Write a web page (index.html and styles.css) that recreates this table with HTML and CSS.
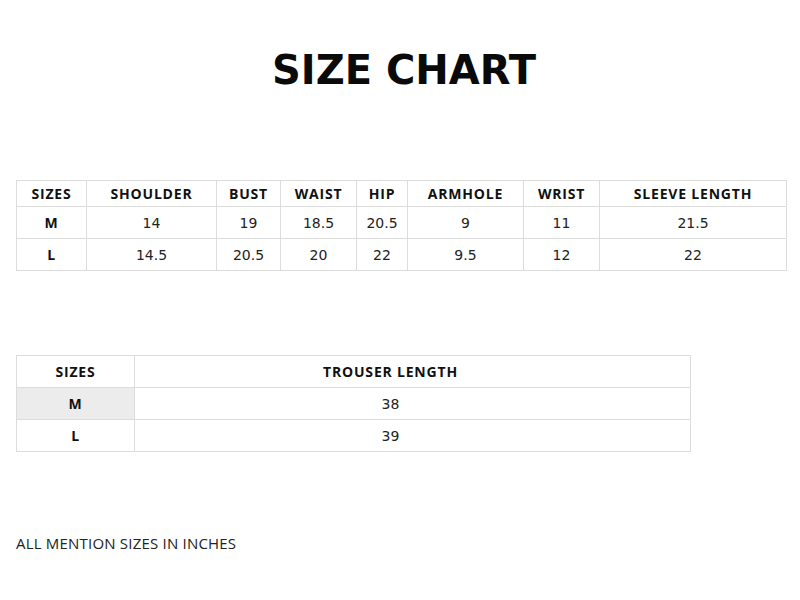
FILE: index.html
```html
<!DOCTYPE html>
<html>
<head>
<meta charset="utf-8">
<link rel="stylesheet" href="styles.css">
</head>
<body>
<div class="page">
  <h1 class="title">SIZE CHART</h1>
  <table class="chart chart-top">
    <colgroup>
      <col style="width:70px"><col style="width:130px"><col style="width:64px"><col style="width:76px"><col style="width:51px"><col style="width:116px"><col style="width:76px"><col style="width:187px">
    </colgroup>
    <tr class="head">
      <th>SIZES</th><th>SHOULDER</th><th>BUST</th><th>WAIST</th><th>HIP</th><th>ARMHOLE</th><th>WRIST</th><th>SLEEVE LENGTH</th>
    </tr>
    <tr class="row">
      <th>M</th><td>14</td><td>19</td><td>18.5</td><td>20.5</td><td>9</td><td>11</td><td>21.5</td>
    </tr>
    <tr class="row">
      <th>L</th><td>14.5</td><td>20.5</td><td>20</td><td>22</td><td>9.5</td><td>12</td><td>22</td>
    </tr>
  </table>

  <table class="chart chart-bottom">
    <colgroup>
      <col style="width:118px"><col style="width:556px">
    </colgroup>
    <tr class="head2">
      <th>SIZES</th><th class="wide">TROUSER LENGTH</th>
    </tr>
    <tr class="row2">
      <th class="shade">M</th><td class="wide">38</td>
    </tr>
    <tr class="row2">
      <th>L</th><td class="wide">39</td>
    </tr>
  </table>

  <p class="note">ALL MENTION SIZES IN INCHES</p>
</div>
</body>
</html>
```

FILE: styles.css
```css
html, body {
  margin: 0;
  padding: 0;
  background: #fff;
}

.page {
  padding: 0 16px;
  width: 800px;
  box-sizing: border-box;
}

.title {
  margin: 0;
  padding-top: 47px;
  height: 180px;
  box-sizing: border-box;
  text-align: center;
  font-family: "DejaVu Sans", Verdana, sans-serif;
  font-weight: bold;
  font-size: 40px;
  line-height: 46px;
  color: #0a0a0a;
  padding-left: 8px;
}

.chart {
  border-collapse: collapse;
  table-layout: fixed;
  color: #111;
}

.chart th, .chart td {
  border: 1px solid #dcdcdc;
  padding: 0;
  text-align: center;
}

.chart th {
  font-family: "Open Sans", sans-serif;
  font-weight: bold;
  font-size: 14px;
  letter-spacing: 0.8px;
}

.chart td {
  font-family: "DejaVu Sans", sans-serif;
  font-size: 14px;
  color: #222;
}

.chart-top {
  width: 770px;
}

.chart-top .head th {
  height: 25px;
}

.chart-top .row th,
.chart-top .row td {
  height: 31px;
}

.chart-bottom {
  width: 674px;
  margin-top: 84px;
}

.chart-bottom .wide {
  padding-right: 44px;
}

.head2 th {
  height: 31px;
}

.row2 th, .row2 td {
  height: 31px;
}

.shade {
  background: #ececec;
}

.note {
  margin: 81px 0 0;
  font-family: "Open Sans", sans-serif;
  font-size: 15px;
  color: #222;
  letter-spacing: 0.2px;
}
```
